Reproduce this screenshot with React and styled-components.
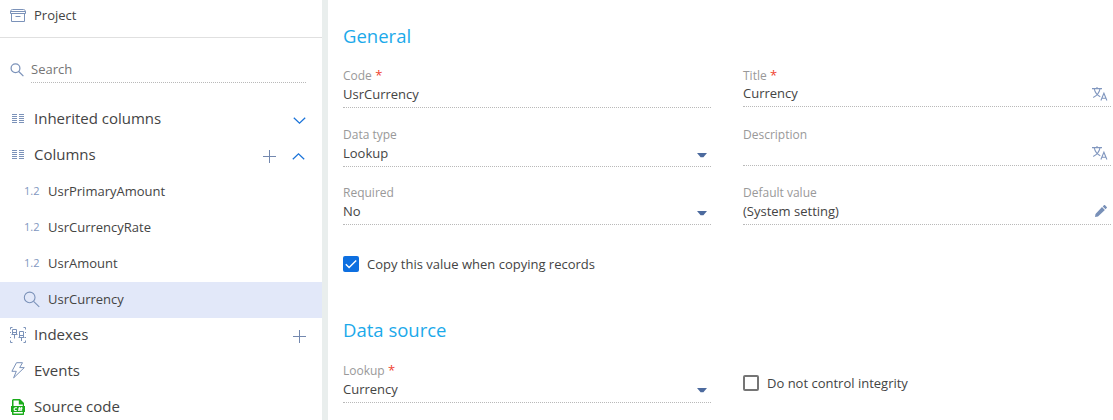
import React from 'react';
import styled, { createGlobalStyle, css } from 'styled-components';

const GlobalStyle = createGlobalStyle`
  * { box-sizing: border-box; }
  body {
    margin: 0;
    background: #fff;
    color: #444;
    font: 13px/18px "Open Sans", "Noto Sans", sans-serif;
    overflow: hidden;
  }
  svg { display: block; flex: none; }
`;

const Page = styled.div`
  display: flex;
  width: 1113px;
  height: 420px;
  overflow: hidden;
`;

const Sidebar = styled.nav`
  flex: none;
  width: 328px;
  border-right: 6px solid #e9eeed;
`;

const ProjectRow = styled.div`
  display: flex;
  align-items: center;
  gap: 8px;
  height: 38px;
  padding: 0 0 7px 10px;
  border-bottom: 1px solid #e0e0e0;
`;

const SearchRow = styled.div`
  display: flex;
  align-items: flex-start;
  gap: 7px;
  height: 64px;
  padding: 22px 16px 0 10px;
  svg { margin-top: 3px; }
`;

const SearchInput = styled.div`
  flex: 1;
  height: 23px;
  color: #757575;
  border-bottom: 1px dotted #b9b9b9;
`;

const Group = styled.div`
  display: flex;
  align-items: center;
  height: 36px;
  padding: 0 16px 4px 10px;
  font-size: 15px;
  line-height: 20px;
`;

const GroupIcon = styled.span`
  display: flex;
  flex: none;
  justify-content: center;
  width: 16px;
  margin: 2px 8px 0 0;
`;

const Actions = styled.span`
  display: flex;
  align-items: center;
  gap: 16px;
  margin: 4px ${p => (p.$inset ? 1 : 0)}px 0 auto;
`;

const Item = styled.div`
  display: flex;
  align-items: center;
  height: 36px;
  padding: 0 0 2px 23px;
  ${p => p.$selected && css`background: #e2e8f9;`}
`;

const ItemIcon = styled.span`
  display: flex;
  flex: none;
  width: 25px;
  padding-left: ${p => (p.$numeric ? 1 : 0)}px;
  color: #8197bf;
  font-size: 11px;
`;

const Main = styled.main`
  flex: 1;
  padding: 23px 2px 0 15px;
`;

const SectionTitle = styled.h2`
  height: 44px;
  margin: 0;
  color: #1ba9ea;
  font-size: 18.5px;
  font-weight: 400;
  line-height: 26px;
`;

const Columns = styled.div`
  display: grid;
  grid-template-columns: 368px 368px;
  column-gap: 32px;
`;

const Column = styled.div`
  display: flex;
  flex-direction: column;
`;

const FieldBox = styled.div`
  height: ${p => p.$height}px;
`;

const Label = styled.div`
  height: 16px;
  color: #999;
  font-size: 12px;
  line-height: 18px;
`;

const Required = styled.span`
  color: #f0432f;
  font-size: 13px;
  line-height: 1;
`;

const Value = styled.div`
  display: flex;
  justify-content: space-between;
  height: 23px;
  margin-top: ${p => (p.$tight ? 1 : 2)}px;
  border-bottom: 1px dotted #b9b9b9;
`;

const Trailing = styled.span`
  display: flex;
  padding: ${p => p.$top}px ${p => p.$right}px 0 0;
`;

const CheckRow = styled.div`
  display: flex;
  align-items: center;
  gap: 8px;
  height: 18px;
`;

const CopyOption = styled(CheckRow)`
  margin: 12px 0 44px;
`;

const IntegrityOption = styled(CheckRow)`
  margin-top: 13px;
`;

const LookupColumn = styled(Column)`
  padding-top: 1px;
`;

const Box = styled.span`
  display: flex;
  align-items: center;
  justify-content: center;
  width: 16px;
  height: 16px;
  border-radius: 2px;
  ${p => (p.$checked ? css`background: #0d6fe0;` : css`border: 2px solid #757575;`)}
`;

const line = '#7b92b9';

const ArchiveIcon = () => (
  <svg width="16" height="13" viewBox="0 0 16 13" fill="none" stroke={line} strokeWidth="1">
    <path d="M.5 4.5V3C.5 1.5 1.3.5 2.5.5h11c1.2 0 2 1 2 2.5v1.5zM1 2.5h14M1.5 4.5v8h13v-8M5.5 7.5h5" />
  </svg>
);

const SearchIcon = ({ size = 14 }) => (
  <svg width={size} height={size} viewBox="0 0 14 14" fill="none" stroke={line} strokeWidth={size > 14 ? 0.9 : 1.25}>
    <circle cx="5.5" cy="5.3" r="4.4" />
    <path d="M8.7 8.5l4.7 4.6" />
  </svg>
);

const ColumnsIcon = () => (
  <svg width="12" height="10" viewBox="0 0 12 10" stroke={line}>
    <path d="M0 .5h5M0 2.5h5M0 4.5h5M0 6.5h5M0 8.5h5M7 .5h5M7 2.5h5M7 4.5h5M7 6.5h5M7 8.5h5" />
  </svg>
);

const IndexIcon = () => (
  <svg width="16" height="16" viewBox="0 0 16 16" fill="none" stroke={line} strokeWidth="1">
    <path d="M2.5.5h-2v2M13.5.5h2v2M2.5 15.5h-2v-2M13.5 15.5h2v-2M.5 5v1M.5 10v1M15.5 5v1M15.5 10v1" />
    <path d="M2.5 7.5v-5h4v5M1.5 7.5h6M2.5 5.5h4M4.5 8v3.5M9.5 10.5v-6h4v6M8.5 10.5h6M9.5 8.5h4M11.5 11v3" />
  </svg>
);

const BoltIcon = () => (
  <svg width="14" height="18" viewBox="0 0 14 18" fill="none" stroke={line} strokeWidth="1" strokeLinejoin="round">
    <path d="M5.5.7h6L8.7 5.6h4.6L2.6 15.9l2.7-6.6H.9z" />
  </svg>
);

const CodeIcon = () => (
  <svg width="14" height="16" viewBox="0 0 14 16">
    <path fill="#1aab1a" d="M2 0h7l4 4v3h1v6h-1v2.5l-.5.5h-11l-.5-.5V13H0V7h1V1z" />
    <path fill="#fff" d="M2.5 1.5h5.3v4h4V7H2.5zM2.5 13h9.3v1.5H2.5z" />
    <path fill="none" stroke="#fff" strokeWidth="1.1" d="M6 8.7H4.2l-1 .8v1.3l.6.7h1.9M8.7 8.2l-.9 3.8M10.7 8.2l-.9 3.8M7.3 9.3h4.2M7 11h4.2" />
  </svg>
);

const PlusIcon = () => (
  <svg width="13" height="13" viewBox="0 0 13 13" stroke="#7388af">
    <path d="M0 6.5h13M6.5 0v13" />
  </svg>
);

const Chevron = ({ up }) => (
  <svg width="13" height="7" viewBox="0 0 13 7" fill="none" stroke="#1a73d9" strokeWidth="1.25">
    <path d={up ? 'M.8 6.2L6.5.9l5.7 5.3' : 'M.8.8l5.7 5.3L12.2.8'} />
  </svg>
);

const Caret = () => (
  <svg width="10" height="5" viewBox="0 0 10 5">
    <path fill="#4c6a9e" d="M0 0h10L6.4 4.2H3.6z" />
  </svg>
);

const TranslateIcon = () => (
  <svg width="16" height="15" viewBox="0 0 16 15" fill="none" stroke="#8197bf" strokeWidth="1.1">
    <path d="M0 1.6h10M5 0v1.6M2.3 2.2c.8 3.6 3 6.1 6 7.6M7.9 2.2C7.2 6 4.8 8.8 1.2 10.6" />
    <path d="M8.9 13.5l3-7.3 3 7.3M9.9 11.2h4" />
  </svg>
);

const PencilIcon = () => (
  <svg width="12" height="12" viewBox="0 0 12 12" fill="#7890b8">
    <path d="M0 12l.5-3L7 2.1l2.9 2.9L3 11.5zM7.7 1.5L8.9.3c.4-.4.8-.4 1.2 0l1.6 1.6c.4.4.4.8 0 1.2L10.5 4.3z" />
  </svg>
);

const CheckIcon = () => (
  <svg width="12" height="10" viewBox="0 0 12 10" fill="none" stroke="#fff" strokeWidth="1.4">
    <path d="M.8 5.2l3.3 3.2 7.1-7" />
  </svg>
);

const trailing = {
  select: { icon: <Caret />, top: 9, right: 4 },
  lookup: { icon: <Caret />, top: 8, right: 4 },
  translate: { icon: <TranslateIcon />, top: 3, right: 3 },
  edit: { icon: <PencilIcon />, top: 3, right: 4 },
};

function Field({ label, value, required, kind, height = 59, tight }) {
  const end = trailing[kind];
  return (
    <FieldBox $height={height}>
      <Label>{label}{required && <Required> *</Required>}</Label>
      <Value $tight={tight}>
        <span>{value}</span>
        {end && <Trailing $top={end.top} $right={end.right}>{end.icon}</Trailing>}
      </Value>
    </FieldBox>
  );
}

function NavGroup({ icon, children, actions, inset }) {
  return (
    <Group>
      <GroupIcon>{icon}</GroupIcon>
      {children}
      {actions && <Actions $inset={inset}>{actions}</Actions>}
    </Group>
  );
}

export default function App() {
  return (
    <>
      <GlobalStyle />
      <Page>
        <Sidebar>
          <ProjectRow><ArchiveIcon />Project</ProjectRow>
          <SearchRow><SearchIcon /><SearchInput>Search</SearchInput></SearchRow>
          <NavGroup icon={<ColumnsIcon />} actions={<Chevron />}>Inherited columns</NavGroup>
          <NavGroup icon={<ColumnsIcon />} actions={<><PlusIcon /><Chevron up /></>} inset>Columns</NavGroup>
          {['UsrPrimaryAmount', 'UsrCurrencyRate', 'UsrAmount'].map(name => (
            <Item key={name}><ItemIcon $numeric>1.2</ItemIcon>{name}</Item>
          ))}
          <Item $selected><ItemIcon><SearchIcon size={17} /></ItemIcon>UsrCurrency</Item>
          <NavGroup icon={<IndexIcon />} actions={<PlusIcon />}>Indexes</NavGroup>
          <NavGroup icon={<BoltIcon />}>Events</NavGroup>
          <NavGroup icon={<CodeIcon />}>Source code</NavGroup>
        </Sidebar>
        <Main>
          <SectionTitle>General</SectionTitle>
          <Columns>
            <Column>
              <Field label="Code" value="UsrCurrency" required />
              <Field label="Data type" value="Lookup" kind="select" height={58} />
              <Field label="Required" value="No" kind="select" />
            </Column>
            <Column>
              <Field label="Title" value="Currency" required kind="translate" tight />
              <Field label="Description" kind="translate" height={58} tight />
              <Field label="Default value" value="(System setting)" kind="edit" />
            </Column>
          </Columns>
          <CopyOption><Box $checked><CheckIcon /></Box>Copy this value when copying records</CopyOption>
          <SectionTitle>Data source</SectionTitle>
          <Columns>
            <LookupColumn>
              <Field label="Lookup" value="Currency" required kind="lookup" />
            </LookupColumn>
            <IntegrityOption><Box />Do not control integrity</IntegrityOption>
          </Columns>
        </Main>
      </Page>
    </>
  );
}
